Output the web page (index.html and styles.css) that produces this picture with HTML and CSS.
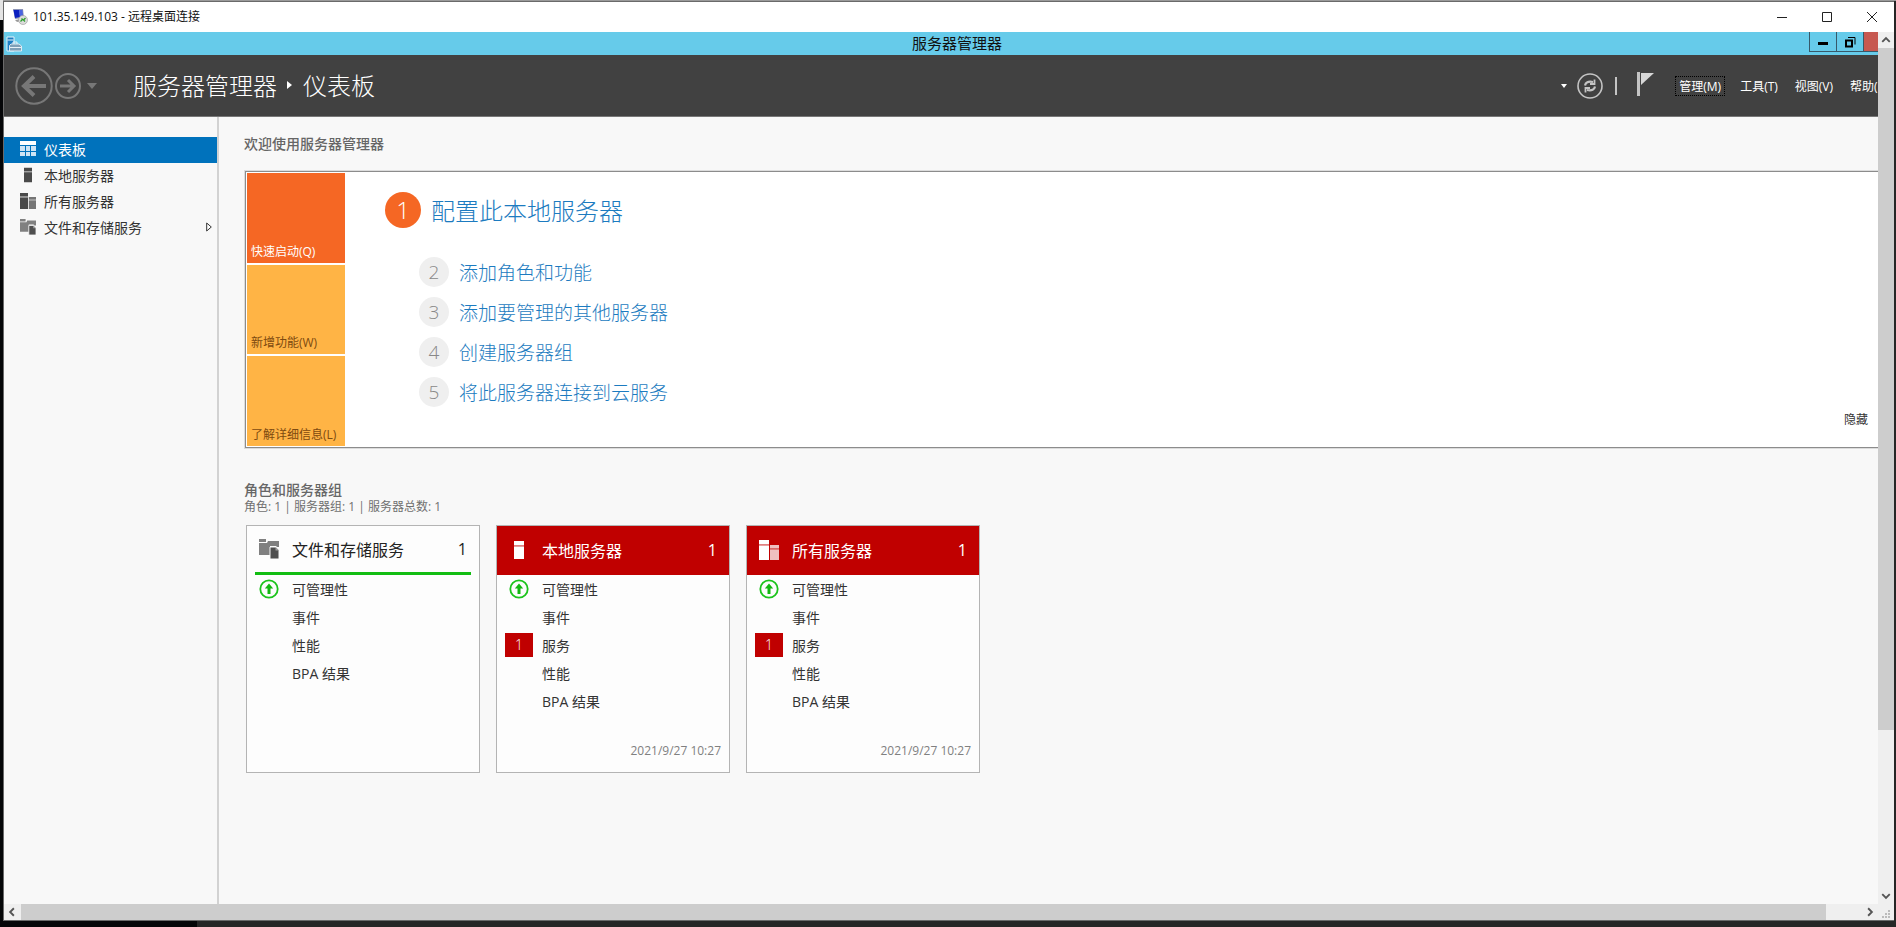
FILE: index.html
```html
<!DOCTYPE html>
<html lang="zh-CN">
<head>
<meta charset="utf-8">
<title>101.35.149.103 - 远程桌面连接</title>
<link rel="stylesheet" href="styles.css">
</head>
<body>
<svg class="defs" aria-hidden="true">
  <symbol id="i-server" viewBox="0 0 20 20"><path d="M5 1h10v4H5zM5 6.500h10V19H5z"/><path d="M5 5h10v1.500H5z" opacity=".5"/></symbol>
  <symbol id="i-servers" viewBox="0 0 20 20"><path d="M0 0h10v4H0zM0 5.500h10V20H0z"/><path d="M0 4h10v1.500H0z" opacity=".5"/><path d="M11 5h9v3h-9zM11 9.500h9V20h-9z" opacity=".75"/><path d="M11 8h9v1.500h-9z" opacity=".4"/></symbol>
  <symbol id="i-files" viewBox="0 0 20 20"><path class="soft" d="M0 0h7v3H0zM0 4h8l1-2h11v6h-2l-1-1h-6v9H0z"/><path class="doc" d="M11 8h5.500l3.500 3.500V20h-9z"/><path class="fold" d="M16.500 8v3.500H20z"/></symbol>
  <symbol id="i-up" viewBox="0 0 20 20"><circle cx="10" cy="10" r="8.700" fill="none" stroke="#1cc41c" stroke-width="1.800"/><path d="M10 4.500 5.800 9.500h2.700V15h3V9.500h2.700z" fill="#12b812"/></symbol>
</svg>

<div class="window">
  <header class="titlebar">
    <svg class="rdp" viewBox="0 0 16 16"><path d="M1 0h10l1 9-9 1z" fill="#8b93b5"/><path d="M1.500 1H7l1 7-5 1z" fill="#0a1fc0"/><path d="M7 1h3.500l.5 6-3 1z" fill="#4a62e0"/><path d="M3 11l6-1v2l-4 1z" fill="#999"/><circle cx="11" cy="11" r="4.500" fill="#dcdcdc" stroke="#999" stroke-width=".6"/><path d="m8.500 12.500 2-2-1-1M13.500 9l-2 2 1.500 1.500" fill="none" stroke="#2d9d2d" stroke-width="1.300"/></svg>
    <h1 class="caption">101.35.149.103 - 远程桌面连接</h1>
    <button class="cap" aria-label="最小化"><svg viewBox="0 0 12 12"><path d="M1 6.500h10"/></svg></button>
    <button class="cap" aria-label="最大化"><svg viewBox="0 0 12 12"><path d="M1.500 1.500h9v9h-9z"/></svg></button>
    <button class="cap" aria-label="关闭"><svg viewBox="0 0 12 12"><path d="m1 1 10 10M11 1 1 11"/></svg></button>
  </header>

  <div class="screen">
    <div class="viewport">
      <div class="remote">
        <div class="bluebar">
          <svg class="appicon" viewBox="0 0 16 16"><path d="M1 1h7v14H1z" fill="#1d7fc4" stroke="#e4f3fa" stroke-width="1"/><path d="M1.500 4h6" stroke="#e4f3fa"/><path d="M3.500 9.500 5 8h8l2.500 2v5h-12z" fill="#7fa0b8" stroke="#e8f2f8" stroke-width=".9"/><path d="M7 8V6h4v2M4 11.500h11" fill="none" stroke="#e8f2f8"/></svg>
          <span class="apptitle">服务器管理器</span>
          <div class="appbtns">
            <button aria-label="最小化"><svg viewBox="0 0 12 12"><path d="M1 6h10v3H1z" fill="#000"/></svg></button>
            <button aria-label="还原"><svg viewBox="0 0 12 12" fill="none" stroke="#000"><path d="M2 4.500h6v6H2z" stroke-width="2"/><path d="M4 1.500h7v7" stroke-width="1"/></svg></button>
            <button class="close" aria-label="关闭"></button>
          </div>
        </div>

        <nav class="ribbon">
          <button class="back" aria-label="后退"><svg viewBox="0 0 38 38"><circle cx="19" cy="19" r="17.700" stroke-width="2"/><path d="M31 19H10M19 9.500 9 19l10 9.500" stroke-width="4"/></svg></button>
          <button class="fwd" aria-label="前进"><svg viewBox="0 0 26 26"><circle cx="13" cy="13" r="12" stroke-width="2"/><path d="M5 13h14M13 7l6 6-6 6" stroke-width="3"/></svg></button>
          <button class="hist" aria-label="历史记录"><svg viewBox="0 0 10 6"><path d="M0 0h10L5 6z"/></svg></button>
          <div class="crumbs"><span>服务器管理器</span><svg viewBox="0 0 6 8"><path d="M0 0v8l5-4z" fill="#fff"/></svg><span>仪表板</span></div>
          <div class="tools">
            <button class="drop" aria-label="更多"><svg viewBox="0 0 6 4"><path d="M0 0h6L3 4z" fill="#fff"/></svg></button>
            <button class="refresh" aria-label="刷新"><svg viewBox="0 0 26 26" fill="none" stroke="#c4c4c4"><circle cx="13" cy="13" r="12" stroke-width="1.600"/><path d="M8 12.500c.5-3 3-4.500 8-3.500M18 13.500c-.5 3-3 4.500-8 3.500" stroke-width="2.200"/><path d="M17.500 6.500v4.500h-4.500M8.500 19.500V15H13" stroke-width="1.800"/></svg></button>
            <i class="sep"></i>
            <button class="flag" aria-label="通知"><svg viewBox="0 0 18 24"><path d="M0 0h3v24H0z" fill="#c4c4c4"/><path d="M4 1h13L4 13z" fill="#d6d6d6"/></svg></button>
            <button class="menu focus">管理(M)</button>
            <button class="menu">工具(T)</button>
            <button class="menu">视图(V)</button>
            <button class="menu">帮助(H)</button>
          </div>
        </nav>

        <div class="body">
          <aside class="side">
            <a class="item on" href="#"><svg viewBox="0 0 16 16"><path d="M0 0h16v4H0z" fill="#fff"/><path d="M0 5h5v5H0zM0 11h5v4H0zM6 5h4v5H6zM6 11h4v4H6zM11 5h5v5h-5zM11 11h5v4h-5z" fill="#cfe4f4"/></svg>仪表板</a>
            <a class="item" href="#"><svg><use href="#i-server"/></svg>本地服务器</a>
            <a class="item" href="#"><svg><use href="#i-servers"/></svg>所有服务器</a>
            <a class="item" href="#"><svg><use href="#i-files"/></svg>文件和存储服务<svg class="more" viewBox="0 0 6 10"><path d="M.7 1v8l4.600-4z" fill="#fff" stroke="#333"/></svg></a>
          </aside>

          <main class="main">
            <h2 class="heading">欢迎使用服务器管理器</h2>
            <section class="welcome">
              <div class="tiles">
                <button class="tile hot">快速启动(Q)</button>
                <button class="tile">新增功能(W)</button>
                <button class="tile">了解详细信息(L)</button>
              </div>
              <div class="steps">
                <a class="step first" href="#"><b>1</b><span>配置此本地服务器</span></a>
                <a class="step" href="#"><b>2</b>添加角色和功能</a>
                <a class="step" href="#"><b>3</b>添加要管理的其他服务器</a>
                <a class="step" href="#"><b>4</b>创建服务器组</a>
                <a class="step" href="#"><b>5</b>将此服务器连接到云服务</a>
              </div>
              <button class="hide">隐藏</button>
            </section>

            <h2 class="heading groups">角色和服务器组</h2>
            <p class="counts">角色: 1 | 服务器组: 1 | 服务器总数: 1</p>
            <div class="cards">
              <article class="card ok">
                <h3><svg><use href="#i-files"/></svg>文件和存储服务<span>1</span></h3>
                <ul>
                  <li><i><svg><use href="#i-up"/></svg></i>可管理性</li>
                  <li><i></i>事件</li>
                  <li><i></i>性能</li>
                  <li><i></i>BPA 结果</li>
                </ul>
              </article>
              <article class="card bad">
                <h3><svg><use href="#i-server"/></svg>本地服务器<span>1</span></h3>
                <ul>
                  <li><i><svg><use href="#i-up"/></svg></i>可管理性</li>
                  <li><i></i>事件</li>
                  <li><i class="alert">1</i>服务</li>
                  <li><i></i>性能</li>
                  <li><i></i>BPA 结果</li>
                </ul>
                <time>2021/9/27 10:27</time>
              </article>
              <article class="card bad">
                <h3><svg><use href="#i-servers"/></svg>所有服务器<span>1</span></h3>
                <ul>
                  <li><i><svg><use href="#i-up"/></svg></i>可管理性</li>
                  <li><i></i>事件</li>
                  <li><i class="alert">1</i>服务</li>
                  <li><i></i>性能</li>
                  <li><i></i>BPA 结果</li>
                </ul>
                <time>2021/9/27 10:27</time>
              </article>
            </div>
          </main>
        </div>
      </div>
    </div>

    <div class="bar vbar">
      <button aria-label="向上"><svg viewBox="0 0 8 8"><path d="m1 5.500 3-3 3 3"/></svg></button>
      <div class="thumb"></div><div class="rest"></div>
      <button aria-label="向下"><svg viewBox="0 0 8 8"><path d="m1 2.500 3 3 3-3"/></svg></button>
    </div>
    <div class="bar hbar">
      <button aria-label="向左"><svg viewBox="0 0 8 8"><path d="m5.500 1-3 3 3 3"/></svg></button>
      <div class="thumb"></div><div class="rest"></div>
      <button aria-label="向右"><svg viewBox="0 0 8 8"><path d="m2.500 1 3 3-3 3"/></svg></button>
    </div>
    <div class="grip"><svg viewBox="0 0 8 8"><path d="M6 0h2v2H6zM3 3h2v2H3zM6 3h2v2H6zM0 6h2v2H0zM3 6h2v2H3zM6 6h2v2H6z" fill="#bbb"/></svg></div>
  </div>
</div>
</body>
</html>
```

FILE: styles.css
```css
* { box-sizing: border-box; margin: 0; padding: 0; }
body {
  height: 100vh;
  padding: 1px 2px 6px 3px;
  background:
    linear-gradient(#e4e4e4, #e4e4e4) 0 0 / 3px 20px no-repeat,
    linear-gradient(#9a9a9a, #9a9a9a) 0 0 / 100% 1px no-repeat,
    linear-gradient(90deg, #050608 0 197px, #262626 197px);
  font-family: "Open Sans", "Noto Sans CJK SC", sans-serif;
  font-size: 14px;
  color: #333;
  overflow: hidden;
}
button { font: inherit; color: inherit; background: none; border: 0; display: flex; align-items: center; justify-content: center; white-space: nowrap; }
a { color: inherit; text-decoration: none; }
svg { display: block; flex: none; }
.defs { position: absolute; width: 0; height: 0; }

.window { height: 100%; display: flex; flex-direction: column; border: 1px solid #6a6a6a; border-right: 0; background: #f7f7f7; }
.titlebar { flex: none; height: 30px; display: flex; align-items: center; padding-left: 8px; background: #fff; color: #111; }
.rdp { width: 16px; height: 16px; }
.caption { flex: 1; padding: 0 0 2px 5px; font-size: 12px; font-weight: 400; }
.cap { width: 45px; height: 28px; }
.cap svg { width: 12px; height: 12px; fill: none; stroke: #222; }

.screen { flex: 1; min-height: 0; display: grid; grid-template: minmax(0, 1fr) 16px / minmax(0, 1fr) 16px; }
.viewport { overflow: hidden; }
.remote { width: calc(100% + 32px); height: 100%; display: flex; flex-direction: column; }

.bluebar { flex: none; height: 23px; display: grid; grid-template-columns: 1fr auto 1fr; align-items: center; background: #66cbea; color: #111; }
.appicon { width: 16px; height: 16px; margin-left: 2px; }
.apptitle { padding-bottom: 2px; font-size: 15px; line-height: 20px; }
.appbtns { align-self: start; justify-self: end; display: flex; height: 20px; border: 1px solid #37596a; border-top: 0; }
.appbtns button { width: 27px; border-right: 1px solid #37596a; }
.appbtns svg { width: 12px; height: 12px; }
.appbtns .close { width: 45px; background: #c75850; border: 0; }

.ribbon { flex: none; height: 62px; display: flex; align-items: center; padding: 0 16px 0 11px; background: #414141; border-bottom: 1px solid #777; color: #fff; }
.ribbon svg { fill: none; stroke: #777; }
.back svg { width: 38px; height: 38px; }
.fwd { margin-left: 2px; }
.fwd svg { width: 26px; height: 26px; }
.hist { margin-left: 6px; }
.ribbon .hist svg { width: 10px; height: 6px; fill: #777; stroke: none; }
.crumbs { display: flex; align-items: center; gap: 10px; margin-left: 36px; padding-bottom: 2px; font-size: 24px; font-weight: 300; }
.ribbon .crumbs svg, .ribbon .drop svg, .ribbon .flag svg { stroke: none; }
.crumbs svg { width: 6px; height: 8px; }
.tools { margin-left: auto; display: flex; align-items: center; font-size: 12px; }
.drop svg { width: 6px; height: 4px; }
.refresh { margin-left: 10px; }
.refresh svg { width: 26px; height: 26px; }
.ribbon .refresh svg { stroke: #c4c4c4; }
.sep { width: 2px; height: 18px; margin-left: 12px; background: #c4c4c4; }
.flag { margin: 0 20px; padding-bottom: 4px; }
.flag svg { width: 18px; height: 24px; }
.menu { height: 20px; padding: 0 3px; border: 1px solid transparent; margin-right: 9px; }
.menu:last-child { margin-right: 0; }
.menu.focus { border: 1px dotted #000; margin-right: 11px; }

.body { flex: 1; min-height: 0; display: flex; background: #f8f8f8; }
.side { flex: none; width: 215px; padding-top: 20px; border-right: 2px solid #d2d2d2; }
.item { height: 26px; display: flex; align-items: center; gap: 8px; padding: 0 5px 2px 16px; }
.item svg { width: 16px; height: 16px; fill: #4a4a4a; }
.item.on { background: #0072bc; color: #fff; }
.item .more { width: 6px; height: 10px; margin-left: auto; }
.soft { fill: #808080; }
.doc { fill: #4f4f4f; stroke: #f8f8f8; stroke-width: 1px; }
.fold { fill: #999; }

.main { flex: 1; min-width: 0; padding: 17px 8px 0 25px; }
.heading { font-size: 14px; line-height: 20px; font-weight: 500; color: #666; }
.welcome { margin: 17px 0 0 1px; height: 277px; display: flex; padding: 1px; border: 1px solid #8c8c8c; background: #fff; box-shadow: 0 0 0 1px #dcdcdc; }
.tiles { flex: none; width: 98px; display: grid; grid-auto-rows: 1fr; gap: 2px; }
.tile { align-items: flex-end; justify-content: flex-start; padding: 0 4px 2px; background: #ffb445; color: #7d4a10; font-size: 12px; line-height: 18px; }
.tile.hot { background: #f56724; color: #fff; }
.steps { flex: 1; padding: 19px 0 0 40px; }
.step { display: flex; align-items: center; gap: 10px; width: fit-content; height: 30px; margin: 0 0 10px 34px; font-size: 19px; font-weight: 300; color: #1c7bc0; }
.step b { width: 30px; height: 30px; border-radius: 50%; background: #efefef; color: #888; font-weight: 300; line-height: 30px; text-align: center; }
.step.first { height: 36px; margin: 0 0 29px; font-size: 24px; }
.step.first b { width: 36px; height: 36px; background: #f56724; color: #fff; line-height: 36px; }
.step.first span { padding-bottom: 2px; }
.hide { align-self: flex-end; margin: 0 32px 17px 0; font-size: 12px; line-height: 18px; }

.groups { margin-top: 32px; }
.counts { font-size: 12px; line-height: 14px; color: #707070; }
.cards { display: flex; gap: 16px; margin: 11px 0 0 2px; }
.card { width: 234px; height: 248px; display: flex; flex-direction: column; border: 1px solid #b4b4b4; background: #fdfdfd; }
.card h3 { flex: none; height: 49px; display: flex; align-items: center; padding: 0 12px 2px; font-size: 16px; font-weight: 400; color: #222; }
.card h3 svg { width: 20px; height: 20px; margin-right: 13px; }
.card h3 span { margin-left: auto; }
.card.ok h3 { margin: 0 8px; padding: 0 4px; border-bottom: 3px solid #12bd12; }
.card.bad h3 { background: #c00000; color: #fff; fill: #fff; }
.card ul { list-style: none; }
.card li { height: 28px; display: flex; align-items: center; gap: 9px; padding: 0 0 1px 8px; }
.card li i { width: 28px; height: 24px; display: flex; align-items: center; justify-content: center; font-style: normal; font-weight: 300; }
.card li svg { width: 20px; height: 20px; }
.card li .alert { background: #c00000; color: #fff; }
.card time { margin: auto 8px 12px auto; font-size: 12px; line-height: 18px; color: #808080; }

.bar { display: flex; background: #efefef; }
.bar button { flex: none; width: 16px; height: 16px; }
.bar svg { width: 10px; height: 10px; fill: none; stroke: #555; stroke-width: 1.500px; }
.thumb { background: #cdcdcd; }
.vbar { flex-direction: column; }
.vbar .thumb { flex: 681; }
.vbar .rest { flex: 158; }
.hbar { gap: 1px; }
.hbar .thumb { flex: 1806; }
.hbar .rest { flex: 34; }
.grip { display: flex; align-items: flex-end; justify-content: flex-end; padding: 0 4px 2px 0; background: #efefef; }
.grip svg { width: 8px; height: 8px; }
```
